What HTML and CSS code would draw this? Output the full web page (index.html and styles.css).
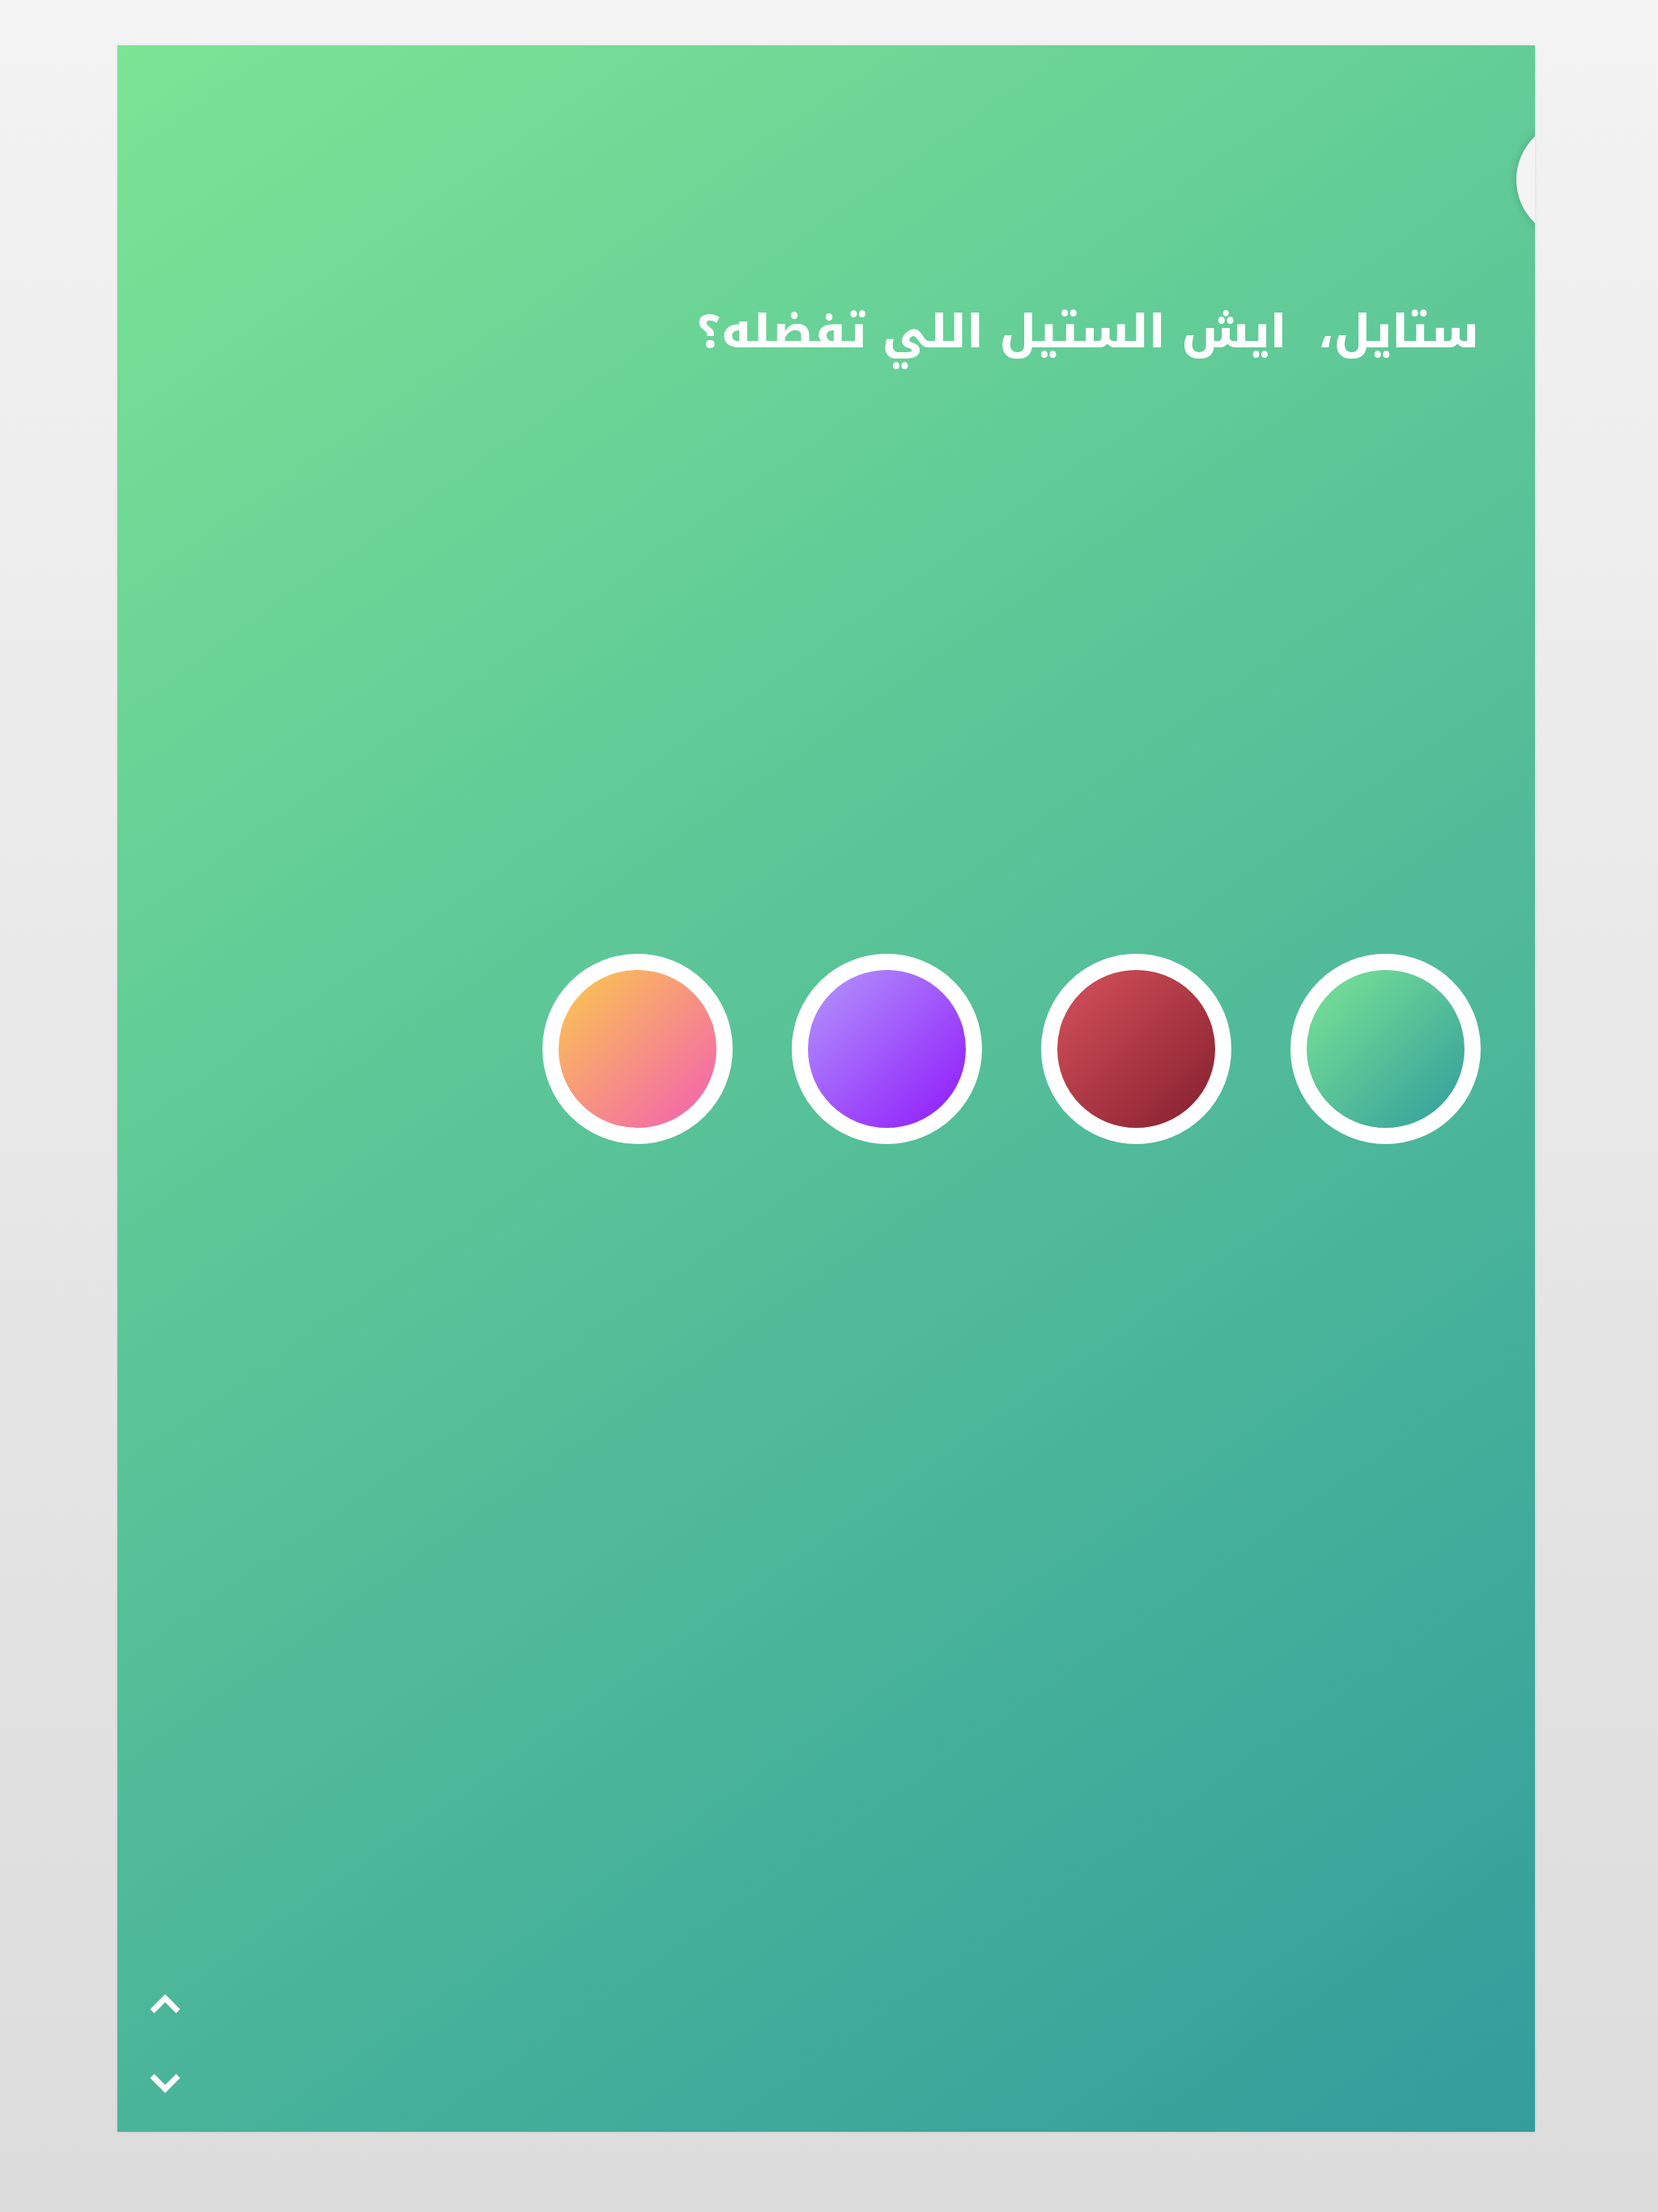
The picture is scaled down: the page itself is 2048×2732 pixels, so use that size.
FILE: index.html
```html
<!DOCTYPE html>
<html lang="ar" dir="rtl">
<head>
<meta charset="utf-8">
<title>ستايل</title>
<link rel="stylesheet" href="styles.css">
</head>
<body>
<main class="page">
  <section class="card">
    <div class="side-knob"></div>
    <h1 class="title">ستايل،  ايش الستيل اللي تفضله؟</h1>
    <div class="options">
      <button class="option opt-green" aria-label="green"></button>
      <button class="option opt-red" aria-label="red"></button>
      <button class="option opt-purple" aria-label="purple"></button>
      <button class="option opt-orange" aria-label="orange"></button>
    </div>
    <nav class="pager">
      <svg class="chev" viewBox="0 0 38 24" width="38" height="24"><polyline points="3,21 19,5 35,21" /></svg>
      <svg class="chev" viewBox="0 0 38 24" width="38" height="24"><polyline points="3,3 19,19 35,3" /></svg>
    </nav>
  </section>
</main>
</body>
</html>
```

FILE: styles.css
```css
html, body {
  margin: 0;
  padding: 0;
}
body {
  width: 2048px;
  height: 2732px;
  background: linear-gradient(to bottom, #f3f3f3 0%, #dcdcdc 100%);
  font-family: "Noto Sans Arabic", "DejaVu Sans", "Noto Sans", sans-serif;
}
.page {
  box-sizing: border-box;
  height: 2732px;
  padding: 56px 152px 99px 145px;
  display: flex;
}
.card {
  position: relative;
  overflow: hidden;
  flex: 1;
  display: flex;
  flex-direction: column;
  background: linear-gradient(145deg, #7be495 0%, #329d9c 100%);
  box-shadow: 0 0 3px rgba(0,0,0,0.12);
  padding: 311px 67px 48px 40px;
}
.side-knob {
  position: absolute;
  top: 92px;
  right: -125px;
  width: 148px;
  height: 148px;
  border-radius: 50%;
  background: #f4f4f4;
  box-shadow: 0 0 12px rgba(0,0,0,0.18);
}
.title {
  margin: 0 2px 0 0;
  font-family: "Noto Kufi Arabic", "Noto Sans Arabic", "DejaVu Sans", sans-serif;
  font-size: 57px;
  line-height: 87px;
  font-weight: 800;
  color: #ffffff;
  white-space: pre;
}
.options {
  margin-top: 724px;
  display: flex;
  gap: 73px;
}
.option {
  box-sizing: border-box;
  width: 235px;
  height: 235px;
  padding: 0;
  border: 20px solid #ffffff;
  border-radius: 50%;
  cursor: pointer;
}
.opt-green { background: linear-gradient(to bottom right, #7be495, #329d9c); }
.opt-red { background: linear-gradient(to bottom right, #d6525b, #841f2e); }
.opt-purple { background: linear-gradient(to bottom right, #b397fb, #8f17fc); }
.opt-orange { background: linear-gradient(to bottom right, #fbca4c, #f35db4); }
.pager {
  margin-top: auto;
  direction: ltr;
  display: flex;
  flex-direction: column;
  align-items: flex-start;
  gap: 74px;
}
.chev {
  display: block;
  fill: none;
  stroke: #ffffff;
  stroke-width: 7;
  stroke-linecap: butt;
}
```
